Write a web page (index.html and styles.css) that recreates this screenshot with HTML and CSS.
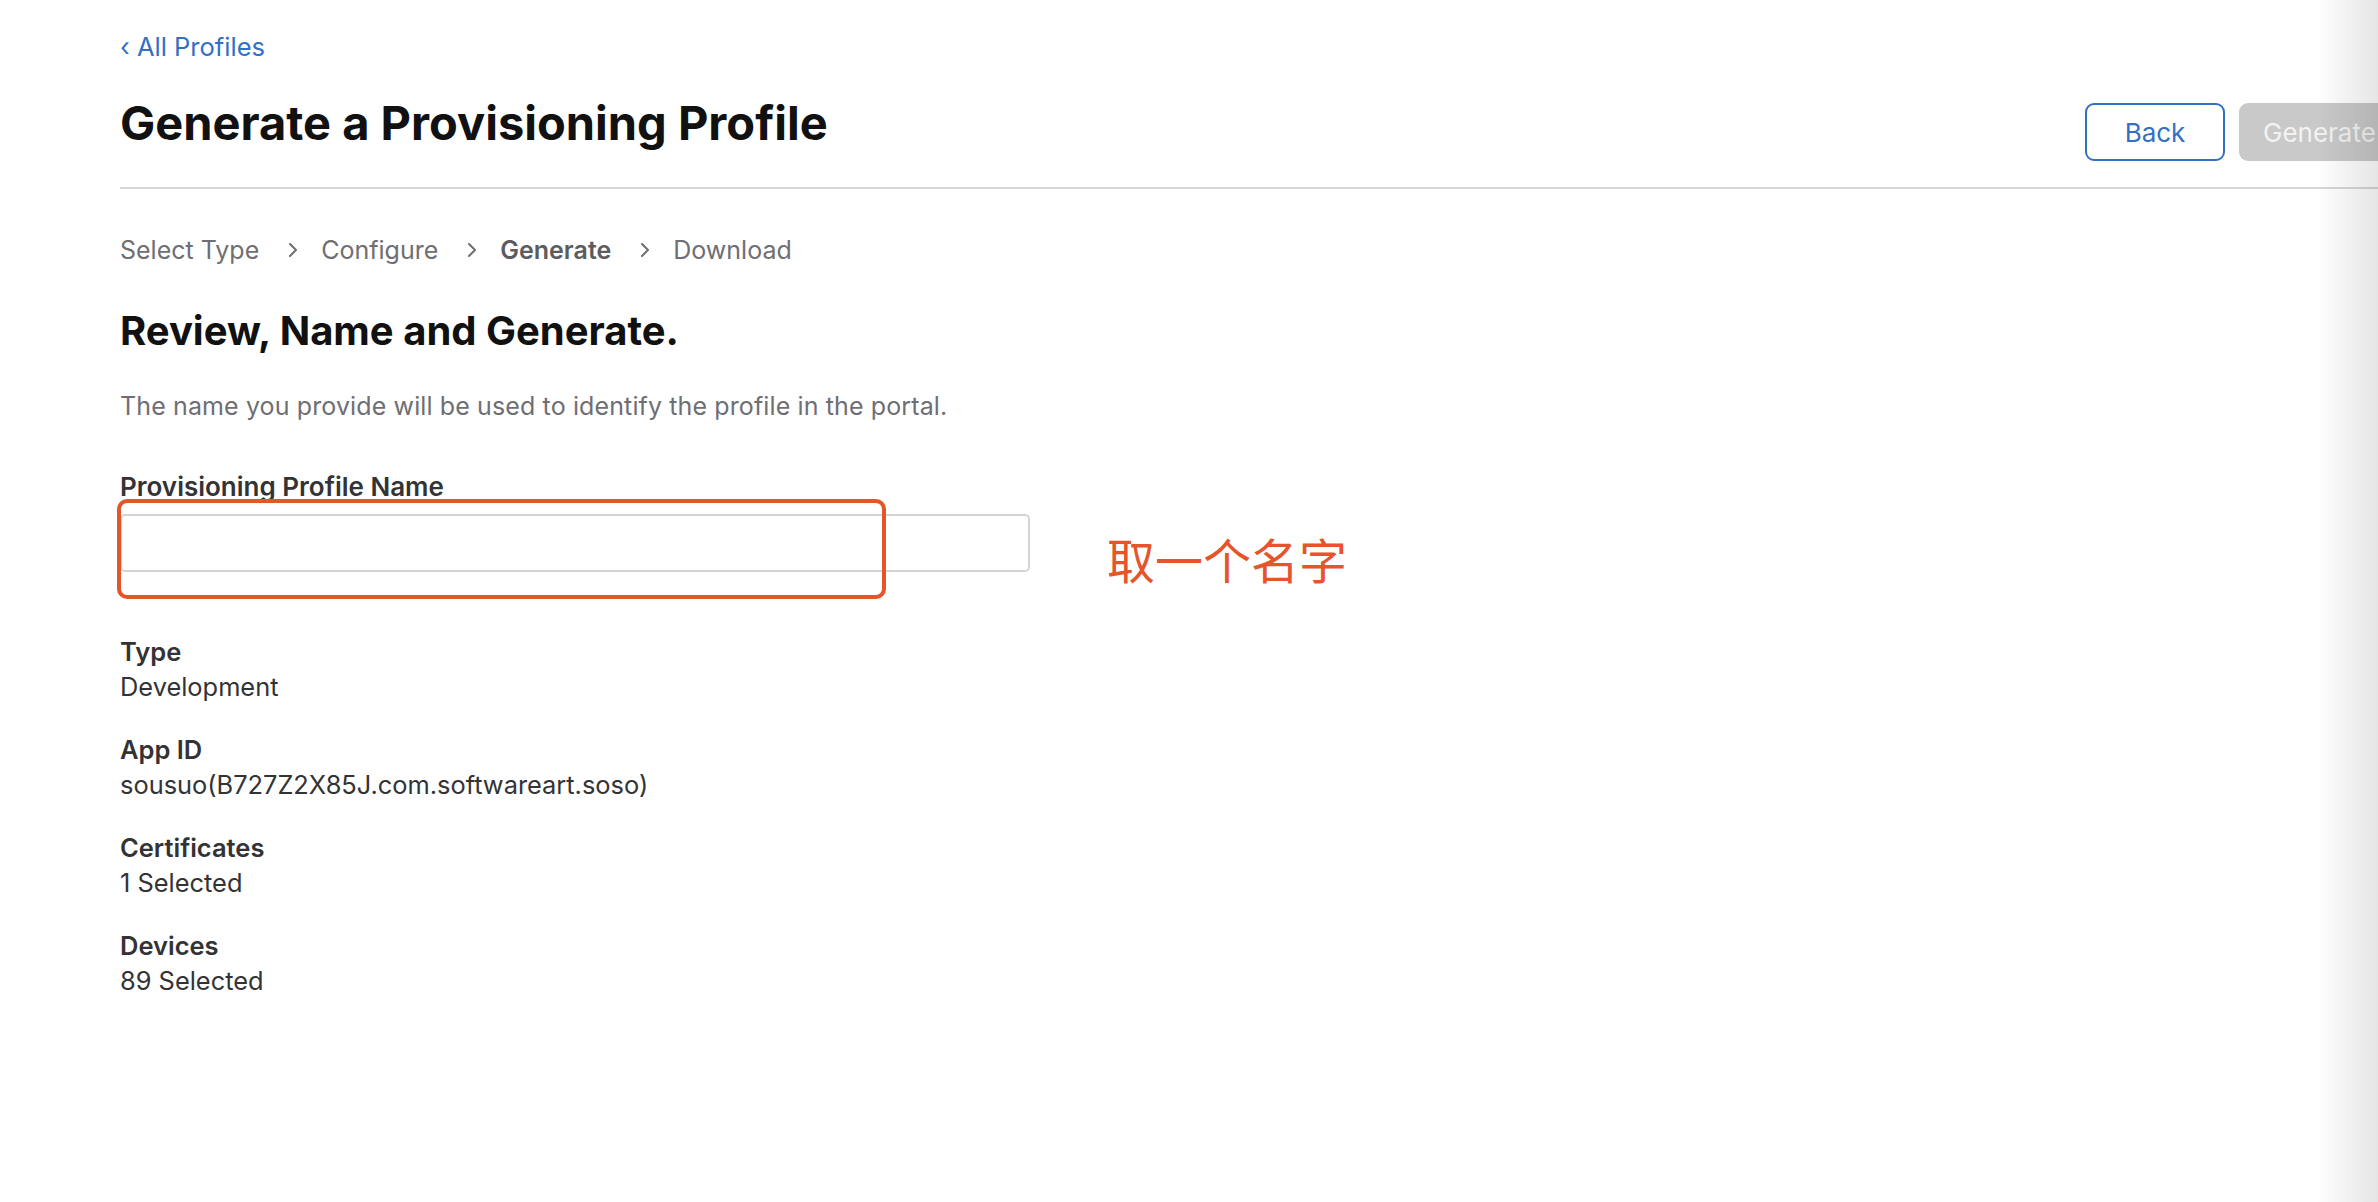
FILE: index.html
```html
<!DOCTYPE html>
<html lang="en">
<head>
<meta charset="utf-8">
<title>Generate a Provisioning Profile</title>
<link rel="stylesheet" href="styles.css">
</head>
<body>
<div class="page">
  <a class="back-link" href="#">&#8249; All Profiles</a>
  <header class="header">
    <h1 class="title">Generate a Provisioning Profile</h1>
    <div class="actions">
      <button class="btn btn-outline">Back</button>
      <button class="btn btn-disabled">Generate</button>
    </div>
  </header>

  <nav class="steps">
    <span class="step">Select Type</span>
    <svg class="chev" width="10" height="16" viewBox="0 0 10 16"><path d="M2 2l6 6-6 6" fill="none" stroke="#6e6e73" stroke-width="2" stroke-linecap="round" stroke-linejoin="round"/></svg>
    <span class="step">Configure</span>
    <svg class="chev" width="10" height="16" viewBox="0 0 10 16"><path d="M2 2l6 6-6 6" fill="none" stroke="#6e6e73" stroke-width="2" stroke-linecap="round" stroke-linejoin="round"/></svg>
    <span class="step step-active">Generate</span>
    <svg class="chev" width="10" height="16" viewBox="0 0 10 16"><path d="M2 2l6 6-6 6" fill="none" stroke="#6e6e73" stroke-width="2" stroke-linecap="round" stroke-linejoin="round"/></svg>
    <span class="step">Download</span>
  </nav>

  <h2 class="section-title">Review, Name and Generate.</h2>
  <p class="desc">The name you provide will be used to identify the profile in the portal.</p>

  <div class="field">
    <label class="field-label" for="pname">Provisioning Profile Name</label>
    <input class="field-input" id="pname" type="text">
    <div class="annot-box"></div>
    <div class="annot-text">取一个名字</div>
  </div>

  <dl class="details">
    <div class="group"><dt>Type</dt><dd>Development</dd></div>
    <div class="group"><dt>App ID</dt><dd>sousuo(B727Z2X85J.com.softwareart.soso)</dd></div>
    <div class="group"><dt>Certificates</dt><dd>1 Selected</dd></div>
    <div class="group"><dt>Devices</dt><dd>89 Selected</dd></div>
  </dl>
</div>
<div class="edge-shade"></div>
</body>
</html>
```

FILE: styles.css
```css
html, body {
  margin: 0;
  padding: 0;
  background: #ffffff;
  overflow: hidden;
}
body {
  font-family: Inter, "Noto Sans", "Liberation Sans", sans-serif;
  color: #333336;
  width: 2378px;
  height: 1202px;
  position: relative;
}
.page {
  margin-left: 120px;
  margin-right: -21px;
  padding-top: 32px;
}
.back-link {
  display: block;
  font-size: 25.5px;
  line-height: 30px;
  color: #3370c4;
  text-decoration: none;
}
.header {
  display: flex;
  justify-content: space-between;
  align-items: flex-start;
  margin-top: 33px;
  padding-bottom: 26px;
  border-bottom: 2px solid #d7d7d7;
}
.title {
  margin: 0;
  font-size: 47px;
  line-height: 56px;
  font-weight: 700;
  color: #111112;
}
.actions {
  display: flex;
  gap: 14px;
  margin-top: 8px;
}
.btn {
  height: 58px;
  font-family: Inter, "Noto Sans", "Liberation Sans", sans-serif;
  font-size: 26px;
  border-radius: 9px;
  padding: 0;
}
.btn-outline {
  width: 140px;
  background: #ffffff;
  color: #3370c4;
  border: 2px solid #3370c4;
}
.btn-disabled {
  width: 160px;
  background: #c9c9c9;
  color: #f3f3f3;
  border: none;
  text-align: left;
  padding-left: 24px;
}
.steps {
  display: flex;
  align-items: center;
  margin-top: 46px;
  font-size: 25px;
  line-height: 30px;
  color: #6e6e73;
}
.chev {
  margin: 0 23px 0 29px;
}
.step-active {
  font-weight: 600;
  color: #5c5c60;
}
.section-title {
  margin: 42px 0 0;
  font-size: 40px;
  line-height: 48px;
  font-weight: 700;
  color: #111112;
}
.desc {
  margin: 36px 0 0;
  font-size: 25px;
  line-height: 30px;
  letter-spacing: 0.12px;
  color: #6e6e73;
}
.field {
  position: relative;
  margin-top: 51px;
  width: 910px;
}
.field-label {
  display: block;
  font-size: 26px;
  line-height: 30px;
  font-weight: 600;
  color: #333336;
}
.field-input {
  display: block;
  box-sizing: border-box;
  margin-top: 12px;
  width: 910px;
  height: 58px;
  border: 2px solid #d4d4d4;
  border-radius: 5px;
  background: #fff;
}
.annot-box {
  position: absolute;
  left: -3px;
  top: 27px;
  width: 769px;
  height: 100px;
  box-sizing: border-box;
  border: 4px solid #e5552b;
  border-radius: 10px;
}
.annot-text {
  position: absolute;
  left: 987px;
  top: 56px;
  white-space: nowrap;
  font-family: "Noto Sans CJK SC", sans-serif;
  font-size: 48px;
  line-height: 60px;
  font-weight: 400;
  color: #e5552b;
}
.details {
  margin: 62px 0 0;
}
.group + .group {
  margin-top: 28px;
}
.details dt {
  font-size: 25.5px;
  line-height: 35px;
  font-weight: 600;
  color: #333336;
}
.details dd {
  margin: 0;
  font-size: 25.4px;
  line-height: 35px;
  color: #333336;
}
.edge-shade {
  position: absolute;
  top: 0;
  right: 0;
  width: 62px;
  height: 100%;
  background: linear-gradient(to right, rgba(0,0,0,0), rgba(0,0,0,0.1));
  pointer-events: none;
}
```
